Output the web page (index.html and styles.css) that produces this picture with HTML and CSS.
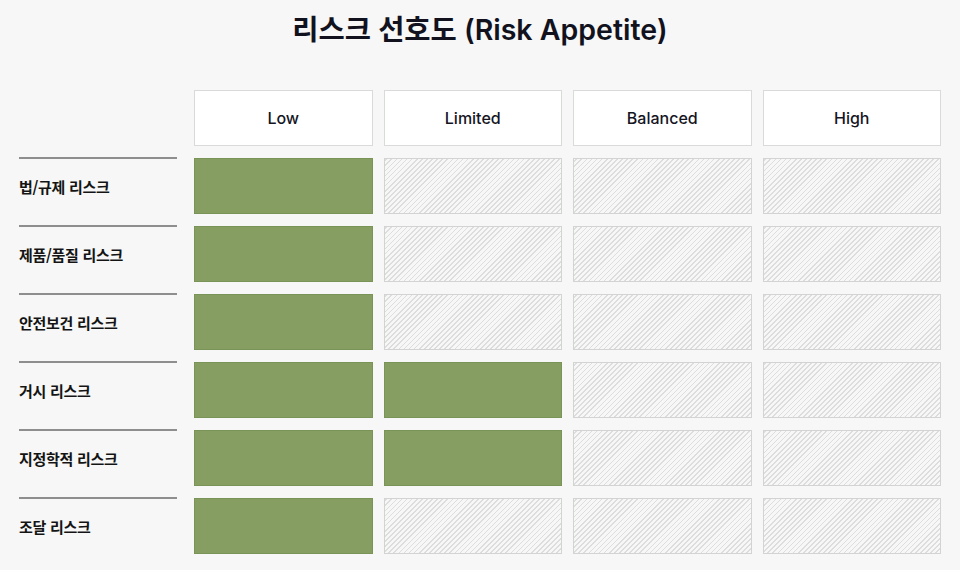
FILE: index.html
```html
<!DOCTYPE html>
<html lang="ko">
<head>
<meta charset="utf-8">
<title>리스크 선호도</title>
<link rel="stylesheet" href="styles.css">
</head>
<body>
<div class="page">
  <h1 class="title">리스크 선호도 (Risk Appetite)</h1>
  <div class="grid">
    <div class="corner"></div>
    <div class="head">Low</div>
    <div class="head">Limited</div>
    <div class="head">Balanced</div>
    <div class="head">High</div>

    <div class="label"><span>법/규제 리스크</span></div>
    <div class="cell on"></div><div class="cell off"></div><div class="cell off"></div><div class="cell off"></div>

    <div class="label"><span>제품/품질 리스크</span></div>
    <div class="cell on"></div><div class="cell off"></div><div class="cell off"></div><div class="cell off"></div>

    <div class="label"><span>안전보건 리스크</span></div>
    <div class="cell on"></div><div class="cell off"></div><div class="cell off"></div><div class="cell off"></div>

    <div class="label"><span>거시 리스크</span></div>
    <div class="cell on"></div><div class="cell on"></div><div class="cell off"></div><div class="cell off"></div>

    <div class="label"><span>지정학적 리스크</span></div>
    <div class="cell on"></div><div class="cell on"></div><div class="cell off"></div><div class="cell off"></div>

    <div class="label"><span>조달 리스크</span></div>
    <div class="cell on"></div><div class="cell off"></div><div class="cell off"></div><div class="cell off"></div>
  </div>
</div>
</body>
</html>
```

FILE: styles.css
```css
html, body {
  margin: 0;
  padding: 0;
  background: #f6f7f6;
}
body {
  font-family: "Inter", "Noto Sans CJK KR", sans-serif;
  color: #141420;
}
.page {
  width: 960px;
  height: 570px;
  box-sizing: border-box;
  padding: 11px 19px 0 19px;
}
.title {
  margin: 0;
  text-align: center;
  font-size: 28.5px;
  font-weight: 600;
  line-height: 38px;
  color: #12121f;
  letter-spacing: 0;
}
.grid {
  margin-top: 41px;
  display: grid;
  grid-template-columns: 164px repeat(4, 178.5px);
  grid-template-rows: 56px repeat(6, 56px);
  column-gap: 11px;
  row-gap: 12px;
}
.head {
  background: #ffffff;
  border: 1px solid #d9dbd9;
  display: flex;
  align-items: center;
  justify-content: center;
  font-size: 16px;
  font-weight: 500;
  color: #15151f;
}
.label {
  width: 158px;
  border-top: 2px solid #8e8e8e;
  margin-top: -1px;
  display: flex;
  align-items: center;
  font-size: 15px;
  font-weight: 700;
  color: #141414;
  font-family: "Noto Sans CJK KR", sans-serif;
  letter-spacing: -0.3px;
}
.cell {
  box-sizing: border-box;
}
.cell.on {
  background: #879e63;
  border: 1px solid #7a9458;
}
.cell.off {
  border: 1px solid #d2d4d2;
  background-color: #f6f7f6;
  background-image: repeating-linear-gradient(
    -45deg,
    #f6f7f6 0px,
    #f6f7f6 2.5px,
    #dcdddc 2.5px,
    #dcdddc 3.6px
  );
}
```
